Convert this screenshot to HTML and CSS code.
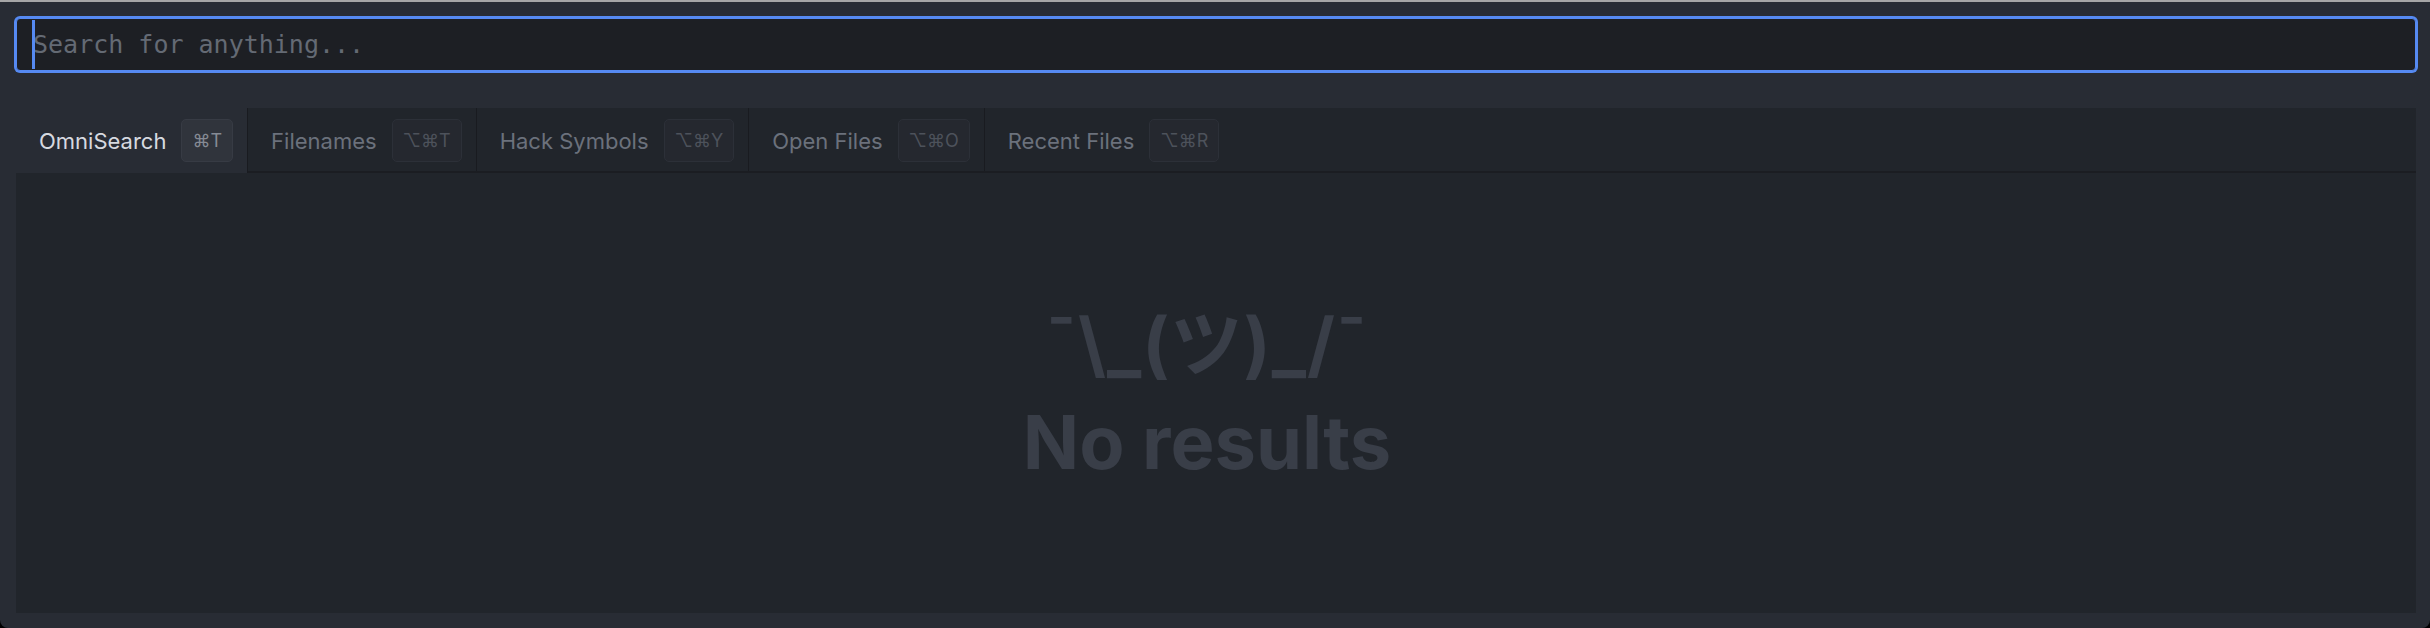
FILE: index.html
```html
<!DOCTYPE html>
<html>
<head>
<meta charset="utf-8">
<link rel="stylesheet" href="styles.css">
</head>
<body>
<div class="window">
  <div class="search">
    <span class="cursor"></span>
    <input class="search-input" type="text" placeholder="Search for anything...">
  </div>
  <div class="panel">
    <div class="tabbar">
      <div class="tab active"><span class="tab-label">OmniSearch</span><span class="kbd">⌘T</span></div>
      <div class="tab"><span class="tab-label">Filenames</span><span class="kbd">⌥⌘T</span></div>
      <div class="tab"><span class="tab-label">Hack Symbols</span><span class="kbd">⌥⌘Y</span></div>
      <div class="tab"><span class="tab-label">Open Files</span><span class="kbd">⌥⌘O</span></div>
      <div class="tab last"><span class="tab-label">Recent Files</span><span class="kbd">⌥⌘R</span></div>
    </div>
    <div class="results">
      <div class="empty">
        <div class="shrug">¯\_(ツ)_/¯</div>
        <div class="empty-title">No results</div>
      </div>
    </div>
  </div>
</div>
</body>
</html>
```
FILE: styles.css
```css
html {
  margin: 0;
  background: #000;
}
body {
  margin: 0;
}
.window {
  box-sizing: border-box;
  width: 2430px;
  height: 628px;
  background: #282c34;
  border-top: 2px solid #a6a6a6;
  border-radius: 0 0 8px 8px;
  padding: 16px 14px 15px 16px;
  display: flex;
  flex-direction: column;
  font-family: "Inter", "Liberation Sans", "Noto Sans CJK JP", sans-serif;
}
.search {
  position: relative;
  height: 53px;
  box-sizing: border-box;
  border: 1px solid #568af2;
  box-shadow: 0 0 0 2px #568af2;
  border-radius: 4px;
  background: #1d1f24;
  display: flex;
  align-items: center;
  flex-shrink: 0;
}
.cursor {
  position: absolute;
  left: 15px;
  top: 1px;
  bottom: 1px;
  width: 3px;
  background: #568af2;
}
.search-input {
  flex: 1;
  border: 0;
  outline: 0;
  background: transparent;
  padding: 0 0 0 16px;
  font-family: "DejaVu Sans Mono", "Liberation Mono", monospace;
  font-size: 25px;
  color: #abb2bf;
}
.search-input::placeholder {
  color: #646a74;
}
.panel {
  margin-top: 37px;
  flex: 1;
  display: flex;
  flex-direction: column;
  background: #21252b;
}
.tabbar {
  display: flex;
  height: 65px;
  box-sizing: border-box;
  border-bottom: 2px solid #1b1d22;
  background: #21252b;
}
.tab {
  display: flex;
  align-items: center;
  gap: 15px;
  padding: 2px 14px 0 23px;
  border-right: 1px solid #191b20;
  font-size: 22px;
  color: #6b717c;
}
.tab.last {
  border-right: 0;
}
.tab.active {
  background: #282c34;
  color: #d7dae0;
  margin-bottom: -2px;
  padding-bottom: 2px;
}
.kbd {
  display: flex;
  align-items: center;
  justify-content: center;
  box-sizing: border-box;
  height: 43px;
  padding: 0 10px;
  border: 1px solid #2c3038;
  border-radius: 5px;
  background: #25282f;
  color: #4d525b;
  font-family: "Inter", "DejaVu Sans", sans-serif;
  font-size: 18px;
}
.tab.active .kbd {
  background: #30343c;
  border-color: #373b44;
  color: #858a94;
}
.results {
  flex: 1;
  display: flex;
  align-items: center;
  justify-content: center;
  padding-right: 18px;
}
.empty {
  text-align: center;
  color: #393e48;
  font-weight: 700;
}
.shrug {
  font-family: "Inter", "Noto Sans CJK JP", sans-serif;
  font-size: 72px;
  line-height: 84px;
  letter-spacing: 1px;
}
.empty-title {
  font-family: "Inter", "Liberation Sans", sans-serif;
  font-size: 74px;
  line-height: 84px;
  margin-top: 14px;
}
```
